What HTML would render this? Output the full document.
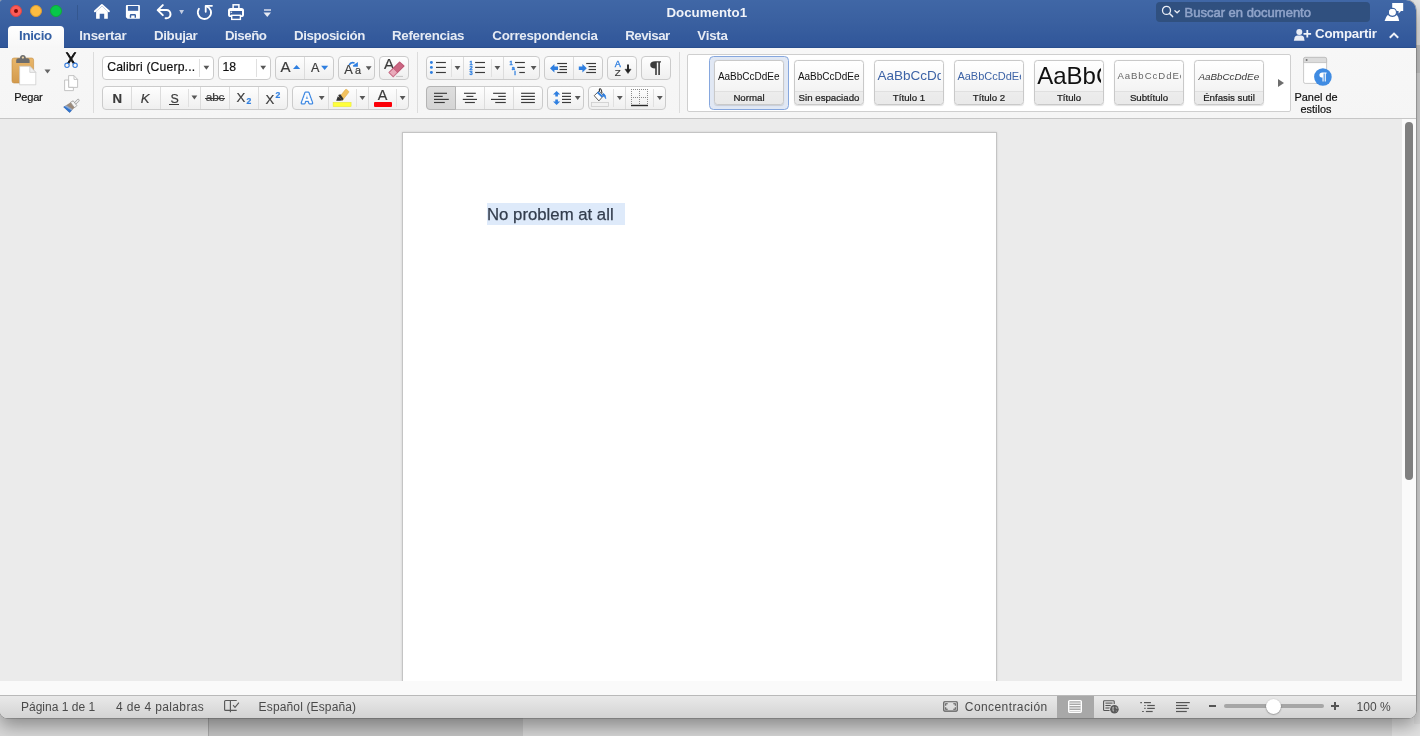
<!DOCTYPE html>
<html lang="es">
<head>
<meta charset="utf-8">
<title>Documento1</title>
<style>
html,body{margin:0;padding:0;}
body{width:1420px;height:736px;overflow:hidden;position:relative;background:#d4d4d4;font-family:"Liberation Sans",sans-serif;-webkit-font-smoothing:antialiased;}
.abs{position:absolute;}
#bg1{left:0;top:700px;width:208px;height:36px;background:#d9d9d9;}
#bg2{left:208px;top:700px;width:315px;height:36px;background:#c3c3c3;border-left:1px solid #a8a8a8;box-sizing:border-box;}
#bg3{left:523px;top:700px;width:869px;height:36px;background:#d5d5d5;}
#bg4{left:1392px;top:0;width:28px;height:736px;background:#e2e2e2;}
#bgr{left:1414px;top:73px;width:6px;height:651px;background:#dadada;}
#bgr2{left:1414px;top:45px;width:6px;height:28px;background:#c8c8c8;}
#bgr3{left:1414px;top:0;width:6px;height:45px;background:#e6e6e6;}
#win{left:0;top:0;width:1416px;height:718px;border-radius:2px 10px 7px 7px;overflow:hidden;background:#f6f6f6;will-change:transform;box-shadow:0 8px 18px rgba(0,0,0,.36),0 0 0 .6px rgba(0,0,0,.32);}
#hdr{left:0;top:0;width:1416px;height:48px;background:linear-gradient(#4067a6 0px,#3a60a0 22px,#31579a 45px,#2f5597 47px,#234885 48px);}
.tl{width:12px;height:12px;border-radius:50%;top:5px;box-sizing:border-box;}
.tab{top:27.8px;height:16px;line-height:16px;font-size:13.3px;letter-spacing:-.12px;font-weight:bold;color:#e6ebf4;white-space:nowrap;}
#tab0{left:8px;top:26px;width:56px;height:23px;background:linear-gradient(#ffffff,#f6f6f6);border-radius:4px 4px 0 0;}
#ribbon{left:0;top:48px;width:1416px;height:70px;background:linear-gradient(#f7f7f7,#f5f5f5);border-bottom:1px solid #c6c6c6;}
.vsep{width:1px;background:#dcdcdc;top:52px;height:61px;}
.grp{box-sizing:border-box;height:24px;border:1px solid #cbcbcb;border-radius:4px;background:linear-gradient(#fefefe,#efefef);}
.r1{top:56px;}
.r2{top:86px;}
.dv{width:1px;background:#dcdcdc;}
.sdv{width:1px;background:#e0e0e0;}
.t{white-space:nowrap;color:#1e1e1e;-webkit-text-stroke-width:.2px;}
.dd{width:0;height:0;border-left:3.5px solid transparent;border-right:3.5px solid transparent;border-top:4.5px solid #555;}
#doc{left:0;top:119px;width:1402px;height:562px;background:#ebebeb;}
#page{left:402px;top:132px;width:593px;height:560px;background:#fff;border:1px solid #c4c4c4;box-shadow:0 0 2px rgba(0,0,0,.12);}
#vtrack{left:1402px;top:119px;width:14px;height:576px;background:#fafafa;}
#vthumb{left:1405px;top:122px;width:8px;height:358px;border-radius:4px;background:#7f7f7f;}
#htrack{left:0;top:681px;width:1416px;height:14px;background:#fafafa;}
#status{left:0;top:695px;width:1416px;height:23px;background:linear-gradient(#e9e9e9,#d3d3d3);border-top:1px solid #b9b9b9;box-sizing:border-box;}
.st{top:699.7px;height:15px;line-height:15px;font-size:12px;color:#4a4a4a;white-space:nowrap;}
</style>
</head>
<body>
<div class="abs" id="bg1"></div><div class="abs" id="bg2"></div><div class="abs" id="bg3"></div><div class="abs" id="bg4"></div><div class="abs" id="bgr"></div><div class="abs" id="bgr2"></div><div class="abs" id="bgr3"></div>
<div class="abs" id="win">
<div class="abs" id="hdr"></div>
<!--TITLEBAR-->
<div class="abs tl" style="left:10px;background:#fc5b57;border:.5px solid #df4744;"></div>
<div class="abs" style="left:14px;top:9px;width:4px;height:4px;border-radius:50%;background:#7a0a06;"></div>
<div class="abs tl" style="left:30px;background:#fdbc40;border:.5px solid #de9f34;"></div>
<div class="abs tl" style="left:50px;background:#07c84a;border:.5px solid #12a83a;"></div>
<div class="abs" style="left:77px;top:5px;width:1px;height:15px;background:#34578f;"></div>
<!-- home -->
<svg class="abs" style="left:92px;top:2px" width="20" height="18" viewBox="0 0 20 18"><path d="M2.9 9.3 L9.9 2.9 L16.9 9.3" fill="none" stroke="#fff" stroke-width="1.9" stroke-linecap="round" stroke-linejoin="round"/><path d="M4.1 9.6 L9.9 4.2 L15.8 9.6 V16.8 H12.2 V11.7 H7.7 V16.8 H4.1 Z" fill="#fff"/></svg>
<!-- save -->
<svg class="abs" style="left:125px;top:4px" width="16" height="16" viewBox="0 0 16 16"><path d="M1.9 1 H14 Q14.9 1 14.9 1.9 V13.9 Q14.9 14.8 14 14.8 H2.6 L.9 13.2 V1.9 Q.9 1 1.9 1 Z" fill="#fff"/><rect x="2.9" y="2" width="10.3" height="4.8" fill="#3b62a2"/><path d="M4.8 13.7 V11.3 Q4.8 10 6.1 10 H9.7 Q11 10 11 11.3 V13.7 H9.6 V11.6 H6.2 V13.7 Z" fill="#3b62a2"/></svg>
<!-- undo -->
<svg class="abs" style="left:156px;top:3px" width="18" height="18" viewBox="0 0 18 18"><path d="M6.8 2.1 L1.7 7.1 L6.8 12.1 M2.2 7.1 H10.4 A4.1 4.1 0 0 1 10.4 15.3 H9.6" fill="none" stroke="#fff" stroke-width="2" stroke-linecap="round" stroke-linejoin="round"/></svg>
<svg class="abs" style="left:177px;top:8px" width="10" height="8" viewBox="0 0 10 8"><path d="M2.2 2 H7 L4.6 6.3 Z" fill="#c3cde2"/></svg>
<!-- redo -->
<svg class="abs" style="left:195px;top:3px" width="19" height="18" viewBox="0 0 19 18"><path d="M3.9 5.8 A6.6 6.6 0 1 0 15.8 7.6 Q14.6 4.4 11.2 3.2" fill="none" stroke="#fff" stroke-width="1.8" stroke-linecap="round"/><path d="M10.7 8.8 V2.8 H17" fill="none" stroke="#fff" stroke-width="1.8" stroke-linecap="round" stroke-linejoin="round"/></svg>
<!-- print -->
<svg class="abs" style="left:227px;top:3px" width="18" height="18" viewBox="0 0 18 18"><rect x="6.1" y="1.8" width="5.8" height="4.4" fill="none" stroke="#fff" stroke-width="1.5"/><rect x="1" y="4.9" width="16" height="9.1" rx="2.6" fill="#fff"/><rect x="3.1" y="8" width="11.9" height="4.2" fill="#3a60a0"/><rect x="3.6" y="8.7" width="1.5" height="1.1" fill="#fff"/><rect x="4.7" y="12.3" width="8.7" height="4.1" fill="#3a60a0" stroke="#fff" stroke-width="1.4"/></svg>
<!-- customize -->
<div class="abs" style="left:263.6px;top:9.3px;width:7.4px;height:1.6px;background:#b3c0db;"></div>
<svg class="abs" style="left:262px;top:11px" width="11" height="8" viewBox="0 0 11 8"><path d="M1.5 1.4 H9 L5.25 6 Z" fill="#e6eaf3"/></svg>
<div class="abs tab" style="left:666.5px;top:4.9px;font-size:13.3px;letter-spacing:0;color:#f0f3f9;">Documento1</div>
<!-- search -->
<div class="abs" style="left:1156px;top:2px;width:214px;height:19.7px;border-radius:4px;background:#30507f;"></div>
<svg class="abs" style="left:1159px;top:4px" width="24" height="16" viewBox="0 0 24 16"><circle cx="7.5" cy="6.4" r="4" fill="none" stroke="#e9edf5" stroke-width="1.3"/><path d="M10.5 9.4 L13.6 12.6" stroke="#e9edf5" stroke-width="1.5" stroke-linecap="round"/><path d="M15.9 6.8 L18.1 8.8 L20.3 6.8" fill="none" stroke="#e9edf5" stroke-width="1.3" stroke-linecap="round"/></svg>
<div class="abs" style="left:1184.5px;top:4.7px;height:16px;line-height:16px;font-size:13px;color:#8fa3c9;-webkit-text-stroke:.55px #8fa3c9;white-space:nowrap;">Buscar en documento</div>
<!-- feedback person -->
<svg class="abs" style="left:1383px;top:1px" width="22" height="22" viewBox="0 0 22 22"><path d="M9.2 2 H20.2 V10 H18 L15.6 12.6 V10 H9.2 Z" fill="#fff"/><circle cx="9.4" cy="11.2" r="3.9" fill="#fff" stroke="#3b62a2" stroke-width="1.3"/><path d="M1.6 19.9 L3.2 16 Q4.4 13.6 7 13.6 H11.6 Q14.2 13.6 15.2 16 L16.2 19.9 Z" fill="#fff"/><circle cx="9.4" cy="11.2" r="3.3" fill="#fff"/><path d="M5 13.4 Q9.4 17.4 13.8 13.4" fill="none" stroke="#3b62a2" stroke-width="1.1"/></svg>
<!-- tabs -->
<div class="abs" id="tab0"></div>
<div class="abs tab" style="left:19px;color:#3560a4;letter-spacing:-0.300px">Inicio</div>
<div class="abs tab" style="left:79.2px;letter-spacing:-0.175px">Insertar</div>
<div class="abs tab" style="left:154px;letter-spacing:-0.340px">Dibujar</div>
<div class="abs tab" style="left:225px;letter-spacing:-0.480px">Diseño</div>
<div class="abs tab" style="left:294px;letter-spacing:-0.410px">Disposición</div>
<div class="abs tab" style="left:392px;letter-spacing:-0.290px">Referencias</div>
<div class="abs tab" style="left:492.3px;letter-spacing:-0.270px">Correspondencia</div>
<div class="abs tab" style="left:625.3px;letter-spacing:-0.530px">Revisar</div>
<div class="abs tab" style="left:697.3px;letter-spacing:-0.220px">Vista</div>
<!-- share -->
<svg class="abs" style="left:1292px;top:26px" width="22" height="17" viewBox="0 0 22 17"><circle cx="7.3" cy="5.9" r="3" fill="#e9edf5"/><path d="M1.8 14.8 L2.6 11.6 Q3.2 9.6 5.4 9.6 H9.2 Q11.4 9.6 12 11.6 L12.6 14.8 Z" fill="#e9edf5"/><path d="M15.3 4 V11.6 M11.5 7.8 H19.1" stroke="#f0f3f9" stroke-width="1.8"/></svg>
<div class="abs tab" style="left:1315px;top:25.6px;letter-spacing:-.2px;color:#f0f3f9;">Compartir</div>
<svg class="abs" style="left:1387px;top:28.6px" width="14" height="12" viewBox="0 0 14 12"><path d="M2.8 8.8 L7 4.6 L11.2 8.8" fill="none" stroke="#eef1f7" stroke-width="2"/></svg>
<!--/TITLEBAR-->
<div class="abs" id="ribbon"></div>
<!--RIBBON-->
<!-- paste -->
<svg class="abs" style="left:10px;top:53px" width="28" height="34" viewBox="0 0 28 34">
<defs><linearGradient id="cb" x1="0" y1="0" x2="0" y2="1"><stop offset="0" stop-color="#e9b76b"/><stop offset="1" stop-color="#d39a4c"/></linearGradient></defs>
<rect x="2" y="5" width="21.6" height="25" rx="2" fill="url(#cb)" stroke="#c48d42" stroke-width=".6"/>
<path d="M6.2 9.9 V7.2 Q6.2 5.2 8.4 5.2 H9.9 Q10.2 1.9 12.9 1.9 Q15.6 1.9 15.9 5.2 H17.4 Q19.6 5.2 19.6 7.2 V9.9 Z" fill="#6d6d6d"/>
<circle cx="12.9" cy="4.6" r="1.15" fill="#eed5a8"/>
<path d="M9.6 13.2 H19.8 L25.8 19.4 V31.8 H9.6 Z" fill="#fff" stroke="#c9c9c9" stroke-width=".7"/>
<path d="M19.8 13.2 V19.4 H25.8 Z" fill="#f0f0f0" stroke="#c9c9c9" stroke-width=".7" stroke-linejoin="round"/>
</svg>
<svg class="abs" style="left:42px;top:67px" width="10" height="8" viewBox="0 0 10 8"><path d="M2.50 2.50 H8.50 L5.50 6.50 Z" fill="#666"/></svg>
<div class="abs t" style="left:14.2px;top:90px;height:14px;line-height:14px;font-size:11px;letter-spacing:-.2px;color:#111;">Pegar</div>
<!-- cut -->
<svg class="abs" style="left:62px;top:50.8px" width="18" height="20" viewBox="0 0 18 20">
<path d="M4.2 1.6 L5.6 1.6 L12.6 12.2 L11.2 12.8 Z M13.8 1.6 L12.4 1.6 L5.4 12.2 L6.8 12.8 Z" fill="#111" stroke="#111" stroke-width=".9" stroke-linejoin="round"/>
<circle cx="5" cy="14.3" r="2.2" fill="none" stroke="#3a7edb" stroke-width="1.1"/><circle cx="13.1" cy="14.3" r="2.2" fill="none" stroke="#3a7edb" stroke-width="1.1"/></svg>
<!-- copy -->
<svg class="abs" style="left:62px;top:73px" width="18" height="20" viewBox="0 0 18 20">
<path d="M6.6 2.6 H12 L15.6 6.4 V14.4 H6.6 Z" fill="#fff" stroke="#bdbdbd" stroke-width=".9"/><path d="M12 2.6 V6.4 H15.6" fill="none" stroke="#bdbdbd" stroke-width=".9"/>
<path d="M2.6 7 H6.6 V14.4 H11.4 V17.6 H2.6 Z" fill="#fff" stroke="#bdbdbd" stroke-width=".9"/></svg>
<!-- format painter -->
<svg class="abs" style="left:61px;top:97px" width="20" height="18" viewBox="0 0 20 18">
<path d="M13.6 5.6 L16.2 2.6 Q17.2 1.8 18 2.6 Q18.6 3.4 17.8 4.4 L15 7" fill="#e8e8e8" stroke="#9a9a9a" stroke-width=".8"/>
<path d="M9.4 5.4 L12.2 3.8 L15.8 8.6 L13.6 10.8 Z" fill="#f4f4f4" stroke="#8f8f8f" stroke-width=".8"/>
<path d="M2.4 10 L9.4 5.6 L13.4 10.8 L8.6 15.8 Z" fill="#9c8b7b"/>
<path d="M2.4 10 L4 9 L10.8 13.4 L8.6 15.8 Z" fill="#2f74d0"/>
<path d="M3.6 9.4 L5.4 8.2 L11.8 12.4 L10.6 13.6 Z" fill="#8db4e8" opacity=".7"/></svg>
<div class="abs vsep" style="left:93px;"></div>
<div class="abs grp r1" style="left:102px;width:112px;background:#fff;"></div>
<div class="abs sdv" style="left:199px;top:59px;height:18px;"></div>
<div class="abs t" style="left:107.2px;top:59px;height:16px;line-height:16px;font-size:12.2px;letter-spacing:.16px;color:#111;">Calibri (Cuerp...</div>
<svg class="abs" style="left:201px;top:63px" width="10" height="8" viewBox="0 0 10 8"><path d="M2.50 2.80 H8.30 L5.40 6.80 Z" fill="#575757"/></svg>
<div class="abs grp r1" style="left:218px;width:53px;background:#fff;"></div>
<div class="abs sdv" style="left:256px;top:59px;height:18px;"></div>
<div class="abs t" style="left:222.6px;top:59px;height:16px;line-height:16px;font-size:12.2px;color:#111;">18</div>
<svg class="abs" style="left:258px;top:63px" width="10" height="8" viewBox="0 0 10 8"><path d="M2.30 2.80 H8.10 L5.20 6.80 Z" fill="#575757"/></svg>
<div class="abs grp r1" style="left:275px;width:59px;"></div>
<div class="abs dv" style="left:304px;top:57px;height:22px;"></div>
<div class="abs t" style="left:280.4px;top:58px;height:18px;line-height:18px;font-size:15px;color:#3b3b3b;">A</div>
<svg class="abs" style="left:291px;top:62px" width="12" height="10" viewBox="0 0 12 10"><path d="M2 7.1 H9.2 L5.6 3 Z" fill="#2f7fe0"/></svg>
<div class="abs t" style="left:310.9px;top:59.8px;height:16px;line-height:16px;font-size:12.6px;color:#3b3b3b;">A</div>
<svg class="abs" style="left:319px;top:62px" width="12" height="10" viewBox="0 0 12 10"><path d="M2.1 3.8 H9.2 L5.65 7.9 Z" fill="#2f7fe0"/></svg>
<div class="abs grp r1" style="left:338px;width:37px;"></div>
<div class="abs t" style="left:344.2px;top:62px;height:16px;line-height:16px;font-size:12.8px;color:#3b3b3b;">A</div>
<div class="abs t" style="left:354.9px;top:62.1px;height:16px;line-height:16px;font-size:10.8px;color:#3b3b3b;">a</div>
<svg class="abs" style="left:346px;top:59px" width="15" height="10" viewBox="0 0 15 10"><path d="M3.2 6 Q4.6 2.8 8.6 4" fill="none" stroke="#2f7fe0" stroke-width="1.7"/><path d="M6.9 6.5 L11.9 3.1 V7.8 H7.2 Z" fill="#2f7fe0"/></svg>
<svg class="abs" style="left:363px;top:64px" width="10" height="8" viewBox="0 0 10 8"><path d="M2.80 2.30 H8.60 L5.70 6.30 Z" fill="#575757"/></svg>
<div class="abs grp r1" style="left:379px;width:30px;"></div>
<div class="abs t" style="left:384.1px;top:54.9px;height:18px;line-height:18px;font-size:15px;color:#3b3b3b;">A</div>
<svg class="abs" style="left:386px;top:60px" width="20" height="18" viewBox="0 0 20 18"><path d="M10 16.4 H17" stroke="#c4c4c4" stroke-width="1"/><path d="M3.2 12.6 L13.6 2.2 L17.9 6.1 L7.2 16.5 Z" fill="#cb6682" stroke="#cb6682" stroke-width="1.4" stroke-linejoin="round"/><path d="M3.2 12.6 L6.8 9 L10.8 12.9 L7.2 16.5 Z" fill="#e9aaba" stroke="#e9aaba" stroke-width="1" stroke-linejoin="round"/><path d="M3.2 12.6 L13.6 2.2 L17.9 6.1 L7.2 16.5 Z" fill="none" stroke="#b04f6b" stroke-width=".6" stroke-linejoin="round" transform="translate(0 0)"/></svg>
<div class="abs grp r2" style="left:102px;width:186px;"></div>
<div class="abs dv" style="left:131px;top:87px;height:22px;"></div>
<div class="abs dv" style="left:160px;top:87px;height:22px;"></div>
<div class="abs dv" style="left:200px;top:87px;height:22px;"></div>
<div class="abs dv" style="left:229px;top:87px;height:22px;"></div>
<div class="abs dv" style="left:258px;top:87px;height:22px;"></div>
<div class="abs sdv" style="left:188px;top:89px;height:18px;"></div>
<div class="abs t" style="left:112.4px;top:89.7px;height:18px;line-height:18px;font-size:13.2px;font-weight:bold;color:#3b3b3b;">N</div>
<div class="abs t" style="left:140.8px;top:89.8px;height:18px;line-height:18px;font-size:13.2px;font-style:italic;color:#3b3b3b;">K</div>
<div class="abs t" style="left:170.4px;top:89.6px;height:18px;line-height:18px;font-size:12.4px;color:#3b3b3b;">S</div>
<div class="abs" style="left:169px;top:104px;width:10px;height:1px;background:#3b3b3b;"></div>
<svg class="abs" style="left:189px;top:93px" width="10" height="8" viewBox="0 0 10 8"><path d="M2.50 2.60 H8.30 L5.40 6.60 Z" fill="#575757"/></svg>
<div class="abs t" style="left:205.8px;top:88.2px;height:18px;line-height:18px;font-size:11.8px;color:#3b3b3b;letter-spacing:-.2px">abc</div>
<div class="abs" style="left:204.8px;top:98px;width:20.6px;height:1.1px;background:#3b3b3b;"></div>
<div class="abs t" style="left:236.4px;top:88.6px;height:18px;line-height:18px;font-size:13.2px;color:#3b3b3b;">X</div>
<div class="abs t" style="left:246.4px;top:94.6px;height:12px;line-height:12px;font-size:8.6px;font-weight:bold;color:#2f7fe0;">2</div>
<div class="abs t" style="left:265.6px;top:90.8px;height:18px;line-height:18px;font-size:13.2px;color:#3b3b3b;">X</div>
<div class="abs t" style="left:275.6px;top:88.8px;height:12px;line-height:12px;font-size:8.6px;font-weight:bold;color:#2f7fe0;">2</div>
<div class="abs grp r2" style="left:292px;width:117px;"></div>
<div class="abs dv" style="left:328px;top:87px;height:22px;"></div>
<div class="abs dv" style="left:368px;top:87px;height:22px;"></div>
<div class="abs sdv" style="left:356px;top:89px;height:18px;"></div>
<div class="abs sdv" style="left:396px;top:89px;height:18px;"></div>
<svg class="abs" style="left:297px;top:88px" width="20" height="20" viewBox="0 0 20 20"><text x="10.05" y="15.2" text-anchor="middle" font-family="Liberation Sans,sans-serif" font-weight="bold" font-size="14.4" fill="#3d88e2" stroke="#3d88e2" stroke-width="3" stroke-linejoin="round">A</text><text x="10.05" y="15.2" text-anchor="middle" font-family="Liberation Sans,sans-serif" font-weight="bold" font-size="14.4" fill="#fff" stroke="#fff" stroke-width=".5" stroke-linejoin="round">A</text></svg>
<svg class="abs" style="left:316px;top:94px" width="10" height="8" viewBox="0 0 10 8"><path d="M2.80 2.10 H8.60 L5.70 6.10 Z" fill="#575757"/></svg>
<svg class="abs" style="left:332px;top:88px" width="20" height="20" viewBox="0 0 20 20"><rect x="1.1" y="14.3" width="18" height="4.4" fill="#ffff3c" stroke="#e4e43a" stroke-width=".5"/><path d="M7 9.6 L13.4 1.6 Q14 1 14.8 1.6 L16.6 3.2 Q17.2 3.8 16.6 4.6 L10.4 12.4 Z" fill="#f3c25f" stroke="#dba843" stroke-width=".5"/><path d="M5.8 8.2 L10.6 12.2 L8 12.8 L4.2 12.8 Z" fill="#333"/><path d="M6.2 7 L7.4 9.6 L10.4 12.2 L11.6 11 L8.4 6.2 Z" fill="#333"/></svg>
<svg class="abs" style="left:357px;top:94px" width="10" height="8" viewBox="0 0 10 8"><path d="M2.50 2.10 H8.30 L5.40 6.10 Z" fill="#575757"/></svg>
<div class="abs t" style="left:377.8px;top:86.4px;height:18px;line-height:18px;font-size:14.4px;color:#3b3b3b;">A</div>
<div class="abs" style="left:374px;top:102.2px;width:18px;height:4.6px;border-radius:1px;background:#fb0007;"></div>
<svg class="abs" style="left:397px;top:94px" width="10" height="8" viewBox="0 0 10 8"><path d="M2.70 2.10 H8.50 L5.60 6.10 Z" fill="#575757"/></svg>
<div class="abs vsep" style="left:417px;"></div>
<div class="abs grp r1" style="left:426px;width:114px;"></div>
<div class="abs dv" style="left:463px;top:57px;height:22px;"></div>
<div class="abs dv" style="left:503px;top:57px;height:22px;"></div>
<div class="abs sdv" style="left:451px;top:59px;height:18px;"></div>
<div class="abs sdv" style="left:491px;top:59px;height:18px;"></div>
<svg class="abs" style="left:426px;top:56px" width="25" height="24" viewBox="0 0 25 24"><circle cx="5.4" cy="6.5" r="1.45" fill="#2f7fe0"/><circle cx="5.4" cy="11.4" r="1.45" fill="#2f7fe0"/><circle cx="5.4" cy="16.5" r="1.45" fill="#2f7fe0"/><path d="M10.0 6.5 H19.9" stroke="#3b3b3b" stroke-width="1.15"/><path d="M10.0 11.4 H19.9" stroke="#3b3b3b" stroke-width="1.15"/><path d="M10.0 16.5 H19.9" stroke="#3b3b3b" stroke-width="1.15"/></svg>
<svg class="abs" style="left:452px;top:63px" width="10" height="8" viewBox="0 0 10 8"><path d="M2.60 2.90 H8.40 L5.50 6.90 Z" fill="#575757"/></svg>
<svg class="abs" style="left:463px;top:56px" width="28" height="24" viewBox="0 0 28 24"><text x="8" y="8.9" font-family="Liberation Sans,sans-serif" font-size="5.6" font-weight="bold" fill="#2f7fe0" stroke="#2f7fe0" stroke-width=".3" text-anchor="middle">1</text><text x="8" y="13.8" font-family="Liberation Sans,sans-serif" font-size="5.6" font-weight="bold" fill="#2f7fe0" stroke="#2f7fe0" stroke-width=".3" text-anchor="middle">2</text><text x="8" y="18.9" font-family="Liberation Sans,sans-serif" font-size="5.6" font-weight="bold" fill="#2f7fe0" stroke="#2f7fe0" stroke-width=".3" text-anchor="middle">3</text><path d="M12.1 6.5 H22.0" stroke="#3b3b3b" stroke-width="1.15"/><path d="M12.1 11.4 H22.0" stroke="#3b3b3b" stroke-width="1.15"/><path d="M12.1 16.5 H22.0" stroke="#3b3b3b" stroke-width="1.15"/></svg>
<svg class="abs" style="left:492px;top:63px" width="10" height="8" viewBox="0 0 10 8"><path d="M2.50 2.90 H8.30 L5.40 6.90 Z" fill="#575757"/></svg>
<svg class="abs" style="left:503px;top:56px" width="28" height="24" viewBox="0 0 28 24"><text x="8" y="8.9" font-family="Liberation Sans,sans-serif" font-size="5.6" font-weight="bold" fill="#2f7fe0" stroke="#2f7fe0" stroke-width=".3" text-anchor="middle">1</text><text x="10.4" y="13.600000000000001" font-family="Liberation Sans,sans-serif" font-size="5.6" font-weight="bold" fill="#2f7fe0" stroke="#2f7fe0" stroke-width=".3" text-anchor="middle">a</text><text x="12" y="18.9" font-family="Liberation Sans,sans-serif" font-size="5.6" font-weight="bold" fill="#2f7fe0" stroke="#2f7fe0" stroke-width=".3" text-anchor="middle">i</text><path d="M12.0 6.5 H21.9" stroke="#3b3b3b" stroke-width="1.15"/><path d="M14.2 11.4 H21.9" stroke="#3b3b3b" stroke-width="1.15"/><path d="M16.3 16.5 H21.9" stroke="#3b3b3b" stroke-width="1.15"/></svg>
<svg class="abs" style="left:528px;top:63px" width="10" height="8" viewBox="0 0 10 8"><path d="M2.70 2.90 H8.50 L5.60 6.90 Z" fill="#575757"/></svg>
<div class="abs grp r1" style="left:544px;width:59px;"></div>
<div class="abs dv" style="left:573px;top:57px;height:22px;"></div>
<svg class="abs" style="left:544px;top:56px" width="29" height="24" viewBox="0 0 29 24"><path d="M6 12.2 L10.4 8 V10.4 H14 V14 H10.4 V16.4 Z" fill="#2f7fe0"/><path d="M13.2 7.5 H23.0" stroke="#3b3b3b" stroke-width="1.15"/><path d="M15.5 10.6 H23.0" stroke="#3b3b3b" stroke-width="1.15"/><path d="M15.5 13.5 H23.0" stroke="#3b3b3b" stroke-width="1.15"/><path d="M13.2 16.5 H23.0" stroke="#3b3b3b" stroke-width="1.15"/></svg>
<svg class="abs" style="left:573px;top:56px" width="29" height="24" viewBox="0 0 29 24"><path d="M13.8 12.2 L9.4 8 V10.4 H5.8 V14 H9.4 V16.4 Z" fill="#2f7fe0"/><path d="M13.2 7.5 H23.0" stroke="#3b3b3b" stroke-width="1.15"/><path d="M15.6 10.6 H23.0" stroke="#3b3b3b" stroke-width="1.15"/><path d="M15.6 13.5 H23.0" stroke="#3b3b3b" stroke-width="1.15"/><path d="M13.2 16.5 H23.0" stroke="#3b3b3b" stroke-width="1.15"/></svg>
<div class="abs grp r1" style="left:607px;width:30px;"></div>
<div class="abs t" style="left:614.8px;top:58.1px;height:12px;line-height:12px;font-size:9.2px;color:#2f7fe0;-webkit-text-stroke:.35px #2f7fe0;">A</div>
<div class="abs t" style="left:614.7px;top:66.5px;height:12px;line-height:12px;font-size:9.8px;color:#3b3b3b;">Z</div>
<svg class="abs" style="left:623px;top:60.6px" width="10" height="15" viewBox="0 0 10 15"><path d="M5 3.4 V10" stroke="#222" stroke-width="1.9"/><path d="M1.9 8.2 H8.1 L5 12.6 Z" fill="#222" stroke="#222" stroke-width=".4" stroke-linejoin="round"/></svg>
<div class="abs grp r1" style="left:641px;width:30px;"></div>
<svg class="abs" style="left:647px;top:59px" width="16" height="18" viewBox="0 0 16 18"><path d="M8.2 2.2 H14 V3.6 H12.9 V16 H11.3 V3.6 H9.8 V16 H8.2 V9.6 Q3.2 9.6 3.2 5.8 Q3.2 2.2 8.2 2.2 Z" fill="#3b3b3b"/></svg>
<div class="abs vsep" style="left:679px;"></div>
<div class="abs grp r2" style="left:426px;width:117px;"></div>
<div class="abs" style="left:426px;top:86px;width:30px;height:24px;box-sizing:border-box;border:1px solid #b4b4b4;border-radius:4px 0 0 4px;background:linear-gradient(#dedede,#d4d4d4);"></div>
<div class="abs dv" style="left:484px;top:87px;height:22px;"></div>
<div class="abs dv" style="left:513px;top:87px;height:22px;"></div>
<svg class="abs" style="left:426px;top:86px" width="30" height="24" viewBox="0 0 30 24"><path d="M8.0 7.3 H21.0" stroke="#3b3b3b" stroke-width="1.15"/><path d="M8.0 10.4 H16.7" stroke="#3b3b3b" stroke-width="1.15"/><path d="M8.0 13.4 H22.8" stroke="#3b3b3b" stroke-width="1.15"/><path d="M8.0 16.5 H18.8" stroke="#3b3b3b" stroke-width="1.15"/></svg>
<svg class="abs" style="left:455px;top:86px" width="30" height="24" viewBox="0 0 30 24"><path d="M9.0 7.3 H20.8" stroke="#3b3b3b" stroke-width="1.15"/><path d="M11.4 10.4 H18.4" stroke="#3b3b3b" stroke-width="1.15"/><path d="M7.8 13.4 H22.0" stroke="#3b3b3b" stroke-width="1.15"/><path d="M9.9 16.5 H19.9" stroke="#3b3b3b" stroke-width="1.15"/></svg>
<svg class="abs" style="left:484px;top:86px" width="30" height="24" viewBox="0 0 30 24"><path d="M9.1 7.3 H21.8" stroke="#3b3b3b" stroke-width="1.15"/><path d="M14.2 10.4 H21.8" stroke="#3b3b3b" stroke-width="1.15"/><path d="M7.0 13.4 H21.8" stroke="#3b3b3b" stroke-width="1.15"/><path d="M11.2 16.5 H21.8" stroke="#3b3b3b" stroke-width="1.15"/></svg>
<svg class="abs" style="left:513px;top:86px" width="30" height="24" viewBox="0 0 30 24"><path d="M8.1 7.3 H21.9" stroke="#3b3b3b" stroke-width="1.15"/><path d="M8.1 10.4 H21.9" stroke="#3b3b3b" stroke-width="1.15"/><path d="M8.1 13.4 H21.9" stroke="#3b3b3b" stroke-width="1.15"/><path d="M8.1 16.5 H21.9" stroke="#3b3b3b" stroke-width="1.15"/></svg>
<div class="abs grp r2" style="left:547px;width:37px;"></div>
<svg class="abs" style="left:547px;top:86px" width="37" height="24" viewBox="0 0 37 24"><path d="M9.6 5 L13.2 8.6 H10.9 V10.6 H8.3 V8.6 H6 Z" fill="#2f7fe0"/><path d="M9.6 19 L13.2 15.4 H10.9 V13.4 H8.3 V15.4 H6 Z" fill="#2f7fe0"/><path d="M15.0 7.3 H24.0" stroke="#3b3b3b" stroke-width="1.15"/><path d="M15.0 10.4 H24.0" stroke="#3b3b3b" stroke-width="1.15"/><path d="M15.0 13.4 H24.0" stroke="#3b3b3b" stroke-width="1.15"/><path d="M15.0 16.5 H24.0" stroke="#3b3b3b" stroke-width="1.15"/></svg>
<svg class="abs" style="left:572px;top:94px" width="10" height="8" viewBox="0 0 10 8"><path d="M2.80 2.10 H8.60 L5.70 6.10 Z" fill="#575757"/></svg>
<div class="abs grp r2" style="left:588px;width:78px;"></div>
<div class="abs dv" style="left:625px;top:87px;height:22px;"></div>
<div class="abs sdv" style="left:613px;top:89px;height:18px;"></div>
<div class="abs sdv" style="left:653px;top:89px;height:18px;"></div>
<svg class="abs" style="left:588px;top:86px" width="25" height="24" viewBox="0 0 25 24"><path d="M11.7 5.6 Q10.9 2.7 12.1 2.7 Q13.4 2.7 14 7.2" fill="none" stroke="#333" stroke-width="1.1"/><path d="M6.2 9.7 L10.9 5.1 L15.5 9.7 L10.9 14.9 Z" fill="#fff" stroke="#555" stroke-width=".95" stroke-linejoin="round"/><path d="M9.6 6.2 L14.4 10.9" stroke="#2f7fe0" stroke-width="1.9"/><path d="M15.2 7.2 Q18 8.2 17.9 12.9 Q16.6 10.4 14.6 9.8 Z" fill="#2f7fe0" stroke="#2f7fe0" stroke-width=".5"/><rect x="3.5" y="16.5" width="17" height="4" fill="#f1f1f1" stroke="#cdcdcd" stroke-width=".8"/></svg>
<svg class="abs" style="left:614px;top:94px" width="10" height="8" viewBox="0 0 10 8"><path d="M2.90 2.10 H8.70 L5.80 6.10 Z" fill="#575757"/></svg>
<svg class="abs" style="left:625px;top:86px" width="28" height="24" viewBox="0 0 28 24"><path d="M6 3.5 H23" stroke="#8a8a8a" stroke-width="1" stroke-dasharray="1 1"/><path d="M6 11.5 H23" stroke="#8a8a8a" stroke-width="1" stroke-dasharray="1 1"/><path d="M6.5 3 V18" stroke="#8a8a8a" stroke-width="1" stroke-dasharray="1 1"/><path d="M14.5 3 V18" stroke="#8a8a8a" stroke-width="1" stroke-dasharray="1 1"/><path d="M22.5 3 V18" stroke="#8a8a8a" stroke-width="1" stroke-dasharray="1 1"/><rect x="6" y="18.8" width="17" height="1.4" fill="#2a2a2a"/></svg>
<svg class="abs" style="left:654px;top:94px" width="10" height="8" viewBox="0 0 10 8"><path d="M2.90 2.10 H8.70 L5.80 6.10 Z" fill="#575757"/></svg>
<div class="abs" style="left:687px;top:54px;width:604px;height:58px;box-sizing:border-box;border:1px solid #cfcfcf;border-radius:2px;background:#fff;"></div>
<div class="abs" style="left:709px;top:56px;width:80px;height:54px;box-sizing:border-box;border:1px solid #86a7de;border-radius:4.5px;background:#e1e8f4;"></div>
<div class="abs" style="left:714px;top:60px;width:70px;height:45.4px;box-sizing:border-box;border:1px solid #c9c9c9;border-radius:3.5px;background:linear-gradient(#ffffff 0,#f3f3f3 30px,#ededed 30px,#e9e9e9 100%);overflow:hidden;box-shadow:0 .5px 1px rgba(0,0,0,.12);"><div class="abs" style="left:0;top:30px;width:68px;height:1px;background:#e0e0e0;"></div><div class="abs" style="left:2px;top:0;width:64px;height:30px;overflow:hidden;"><div class="abs" style="height:20px;line-height:20px;white-space:nowrap;font-size:10px;color:#111;left:.9px;top:5.6px;">AaBbCcDdEe</div></div><div class="abs" style="left:0;top:29.8px;width:68px;height:13px;line-height:13px;text-align:center;font-size:9.7px;color:#1c1c1c;-webkit-text-stroke-width:.22px;white-space:nowrap;">Normal</div></div>
<div class="abs" style="left:794px;top:60px;width:70px;height:45.4px;box-sizing:border-box;border:1px solid #c9c9c9;border-radius:3.5px;background:linear-gradient(#ffffff 0,#f3f3f3 30px,#ededed 30px,#e9e9e9 100%);overflow:hidden;box-shadow:0 .5px 1px rgba(0,0,0,.12);"><div class="abs" style="left:0;top:30px;width:68px;height:1px;background:#e0e0e0;"></div><div class="abs" style="left:2px;top:0;width:64px;height:30px;overflow:hidden;"><div class="abs" style="height:20px;line-height:20px;white-space:nowrap;font-size:10px;color:#111;left:.9px;top:5.6px;">AaBbCcDdEe</div></div><div class="abs" style="left:0;top:29.8px;width:68px;height:13px;line-height:13px;text-align:center;font-size:9.7px;color:#1c1c1c;-webkit-text-stroke-width:.22px;white-space:nowrap;">Sin espaciado</div></div>
<div class="abs" style="left:874px;top:60px;width:70px;height:45.4px;box-sizing:border-box;border:1px solid #c9c9c9;border-radius:3.5px;background:linear-gradient(#ffffff 0,#f3f3f3 30px,#ededed 30px,#e9e9e9 100%);overflow:hidden;box-shadow:0 .5px 1px rgba(0,0,0,.12);"><div class="abs" style="left:0;top:30px;width:68px;height:1px;background:#e0e0e0;"></div><div class="abs" style="left:2px;top:0;width:64px;height:30px;overflow:hidden;"><div class="abs" style="height:20px;line-height:20px;white-space:nowrap;font-size:13.5px;color:#3d63a6;left:0.6px;top:4.9px;">AaBbCcDd</div></div><div class="abs" style="left:0;top:29.8px;width:68px;height:13px;line-height:13px;text-align:center;font-size:9.7px;color:#1c1c1c;-webkit-text-stroke-width:.22px;white-space:nowrap;">Título 1</div></div>
<div class="abs" style="left:954px;top:60px;width:70px;height:45.4px;box-sizing:border-box;border:1px solid #c9c9c9;border-radius:3.5px;background:linear-gradient(#ffffff 0,#f3f3f3 30px,#ededed 30px,#e9e9e9 100%);overflow:hidden;box-shadow:0 .5px 1px rgba(0,0,0,.12);"><div class="abs" style="left:0;top:30px;width:68px;height:1px;background:#e0e0e0;"></div><div class="abs" style="left:2px;top:0;width:64px;height:30px;overflow:hidden;"><div class="abs" style="height:20px;line-height:20px;white-space:nowrap;font-size:11px;color:#3d63a6;left:0.4px;top:4.7px;">AaBbCcDdEe</div></div><div class="abs" style="left:0;top:29.8px;width:68px;height:13px;line-height:13px;text-align:center;font-size:9.7px;color:#1c1c1c;-webkit-text-stroke-width:.22px;white-space:nowrap;">Título 2</div></div>
<div class="abs" style="left:1034px;top:60px;width:70px;height:45.4px;box-sizing:border-box;border:1px solid #c9c9c9;border-radius:3.5px;background:linear-gradient(#ffffff 0,#f3f3f3 30px,#ededed 30px,#e9e9e9 100%);overflow:hidden;box-shadow:0 .5px 1px rgba(0,0,0,.12);"><div class="abs" style="left:0;top:30px;width:68px;height:1px;background:#e0e0e0;"></div><div class="abs" style="left:2px;top:0;width:64px;height:30px;overflow:hidden;"><div class="abs" style="height:20px;line-height:20px;white-space:nowrap;font-size:24px;color:#111;left:0.2px;top:5.3px;">AaBbC</div></div><div class="abs" style="left:0;top:29.8px;width:68px;height:13px;line-height:13px;text-align:center;font-size:9.7px;color:#1c1c1c;-webkit-text-stroke-width:.22px;white-space:nowrap;">Título</div></div>
<div class="abs" style="left:1114px;top:60px;width:70px;height:45.4px;box-sizing:border-box;border:1px solid #c9c9c9;border-radius:3.5px;background:linear-gradient(#ffffff 0,#f3f3f3 30px,#ededed 30px,#e9e9e9 100%);overflow:hidden;box-shadow:0 .5px 1px rgba(0,0,0,.12);"><div class="abs" style="left:0;top:30px;width:68px;height:1px;background:#e0e0e0;"></div><div class="abs" style="left:2px;top:0;width:64px;height:30px;overflow:hidden;"><div class="abs" style="height:20px;line-height:20px;white-space:nowrap;font-size:9.6px;letter-spacing:.95px;color:#666;left:.4px;top:5.4px;">AaBbCcDdEe</div></div><div class="abs" style="left:0;top:29.8px;width:68px;height:13px;line-height:13px;text-align:center;font-size:9.7px;color:#1c1c1c;-webkit-text-stroke-width:.22px;white-space:nowrap;">Subtítulo</div></div>
<div class="abs" style="left:1194px;top:60px;width:70px;height:45.4px;box-sizing:border-box;border:1px solid #c9c9c9;border-radius:3.5px;background:linear-gradient(#ffffff 0,#f3f3f3 30px,#ededed 30px,#e9e9e9 100%);overflow:hidden;box-shadow:0 .5px 1px rgba(0,0,0,.12);"><div class="abs" style="left:0;top:30px;width:68px;height:1px;background:#e0e0e0;"></div><div class="abs" style="left:2px;top:0;width:64px;height:30px;overflow:hidden;"><div class="abs" style="height:20px;line-height:20px;white-space:nowrap;font-size:9.85px;font-style:italic;color:#3a3a3a;left:1.4px;top:5.6px;">AaBbCcDdEe</div></div><div class="abs" style="left:0;top:29.8px;width:68px;height:13px;line-height:13px;text-align:center;font-size:9.7px;color:#1c1c1c;-webkit-text-stroke-width:.22px;white-space:nowrap;">Énfasis sutil</div></div>
<div class="abs" style="left:1277.8px;top:78.6px;width:0;height:0;border-top:4.2px solid transparent;border-bottom:4.2px solid transparent;border-left:6.2px solid #6d6d6d;"></div>
<svg class="abs" style="left:1300px;top:55px" width="34" height="32" viewBox="0 0 34 32">
<rect x="3.6" y="2.4" width="23" height="26" rx="1.6" fill="#fff" stroke="#bdbdbd" stroke-width=".8"/>
<path d="M3.6 7.6 V4 Q3.6 2.4 5.2 2.4 H25 Q26.6 2.4 26.6 4 V7.6 Z" fill="#dcdcdc" stroke="#bdbdbd" stroke-width=".8"/>
<circle cx="6.6" cy="5" r="1" fill="#6f6f6f"/>
<circle cx="22.9" cy="22" r="8.8" fill="#3f8be2"/>
<path d="M22.4 17.4 H26.6 V18.6 H25.8 V26.6 H24.7 V18.6 H23.6 V26.6 H22.5 V22.6 Q19.4 22.6 19.4 20 Q19.4 17.4 22.4 17.4 Z" fill="#fff"/></svg>
<div class="abs t" style="left:1276px;top:90.6px;width:80px;text-align:center;height:13px;line-height:13px;font-size:10.9px;color:#111;">Panel de</div>
<div class="abs t" style="left:1276px;top:102.6px;width:80px;text-align:center;height:13px;line-height:13px;font-size:10.9px;color:#111;">estilos</div>
<!--/RIBBON-->
<div class="abs" id="doc"></div>
<div class="abs" id="page"></div>
<!--DOC-->
<div class="abs" style="left:487px;top:203px;width:138px;height:21.6px;background:#deeafa;"></div>
<div class="abs" style="left:487px;top:202.7px;height:24px;line-height:24px;font-size:16.75px;color:#333d4d;-webkit-text-stroke:.25px #333d4d;white-space:nowrap;">No problem at all</div>
<!--/DOC-->
<div class="abs" id="vtrack"></div><div class="abs" id="vthumb"></div>
<div class="abs" id="htrack"></div>
<div class="abs" id="status"></div>
<!--STATUS-->
<div class="abs st" style="left:21px;">Página 1 de 1</div>
<div class="abs st" style="left:116px;letter-spacing:.36px">4 de 4 palabras</div>
<svg class="abs" style="left:223px;top:698px" width="18" height="16" viewBox="0 0 18 16"><path d="M7.4 2.5 H2.6 Q1.6 2.5 1.6 3.5 V11.4 Q1.6 12.4 2.6 12.4 H7.4 M7.4 2.5 V14.2 M7.4 2.5 H13.7 M7.4 12.4 H13.7" fill="none" stroke="#585858" stroke-width="1.15"/><path d="M10.1 7.2 L12 9.3 L15.9 4.7" fill="none" stroke="#585858" stroke-width="1.15"/></svg>
<div class="abs st" style="left:258.6px;letter-spacing:.14px">Español (España)</div>
<svg class="abs" style="left:942px;top:699px" width="17" height="14" viewBox="0 0 17 14"><rect x="1.75" y="2.75" width="13.5" height="9.4" rx=".9" fill="none" stroke="#585858" stroke-width="1.15"/><path d="M3.7 6.7 V4.8 H5.7 M11.3 4.8 H13.3 V6.7 M13.3 8.3 V10.2 H11.3 M5.7 10.2 H3.7 V8.3" fill="none" stroke="#585858" stroke-width="1.05"/></svg>
<div class="abs st" style="left:964.8px;letter-spacing:.42px">Concentración</div>
<div class="abs" style="left:1057px;top:696px;width:37px;height:22px;background:#a8a8a8;"></div>
<svg class="abs" style="left:1066px;top:698px" width="18" height="17" viewBox="0 0 18 17"><rect x="2.7" y="2.6" width="12.6" height="11.7" rx="1" fill="none" stroke="#fff" stroke-width="1.4"/><path d="M3.4 5.1 H14.6" stroke="#fff" stroke-width="0.95"/><path d="M3.4 7.5 H14.6" stroke="#fff" stroke-width="0.95"/><path d="M3.4 10 H14.6" stroke="#fff" stroke-width="0.95"/><path d="M3.4 12.5 H14.6" stroke="#fff" stroke-width="0.95"/></svg>
<svg class="abs" style="left:1101px;top:698px" width="20" height="18" viewBox="0 0 20 18"><rect x="2.6" y="2.7" width="10.6" height="9.8" rx=".8" fill="none" stroke="#555" stroke-width="1.1"/><path d="M4.4 5.1 H11.6" stroke="#555" stroke-width="1.1"/><path d="M4.4 7.5 H11.6" stroke="#555" stroke-width="1.1"/><path d="M4.4 10 H9" stroke="#555" stroke-width="1.1"/><circle cx="13.4" cy="11.2" r="5.1" fill="#dedede"/><circle cx="13.4" cy="11.2" r="4.3" fill="#595959"/><path d="M11.2 9.2 L12.8 8.6 L13.2 10 L12.4 11 L13.2 12.2 L12.4 14 L11.4 12.4 Z" fill="#a6a6a6"/><path d="M14.8 8.4 L16.2 9.6 L16.4 11 L15.2 10.8 L14.4 9.6 Z" fill="#a6a6a6"/><path d="M14.8 12.6 L15.8 12.8 L15 14.2 Z" fill="#a6a6a6"/></svg>
<svg class="abs" style="left:1138px;top:698px" width="19" height="17" viewBox="0 0 19 17"><path d="M2.3 4.6 H3.9" stroke="#555" stroke-width="1.2"/><path d="M6 4.6 H12.9" stroke="#555" stroke-width="1.2"/><path d="M6.3 7.5 H7.6" stroke="#555" stroke-width="1.2"/><path d="M9.2 7.5 H16.8" stroke="#555" stroke-width="1.2"/><path d="M6.3 10.4 H7.6" stroke="#555" stroke-width="1.2"/><path d="M9.2 10.4 H16.8" stroke="#555" stroke-width="1.2"/><path d="M4.1 13.5 H5.8" stroke="#555" stroke-width="1.2"/><path d="M7.9 13.5 H14.7" stroke="#555" stroke-width="1.2"/></svg>
<svg class="abs" style="left:1174px;top:698px" width="18" height="17" viewBox="0 0 18 17"><path d="M2 4.6 H15.8" stroke="#555" stroke-width="1.2"/><path d="M2 7.5 H13.3" stroke="#555" stroke-width="1.2"/><path d="M2 10.4 H14.9" stroke="#555" stroke-width="1.2"/><path d="M2 13.5 H12.8" stroke="#555" stroke-width="1.2"/></svg>
<div class="abs" style="left:1209px;top:705.4px;width:7px;height:1.7px;background:#555;"></div>
<div class="abs" style="left:1224px;top:704.3px;width:100px;height:4px;border-radius:2px;background:#a6a6a6;"></div>
<div class="abs" style="left:1266px;top:698.6px;width:15px;height:15px;border-radius:50%;background:#fff;box-shadow:0 .5px 1.5px rgba(0,0,0,.45);"></div>
<div class="abs" style="left:1331px;top:705.4px;width:8px;height:1.7px;background:#555;"></div><div class="abs" style="left:1334.2px;top:702.2px;width:1.7px;height:8px;background:#555;"></div>
<div class="abs st" style="left:1356.6px;">100 %</div>
<!--/STATUS-->
</div>
</body>
</html>
